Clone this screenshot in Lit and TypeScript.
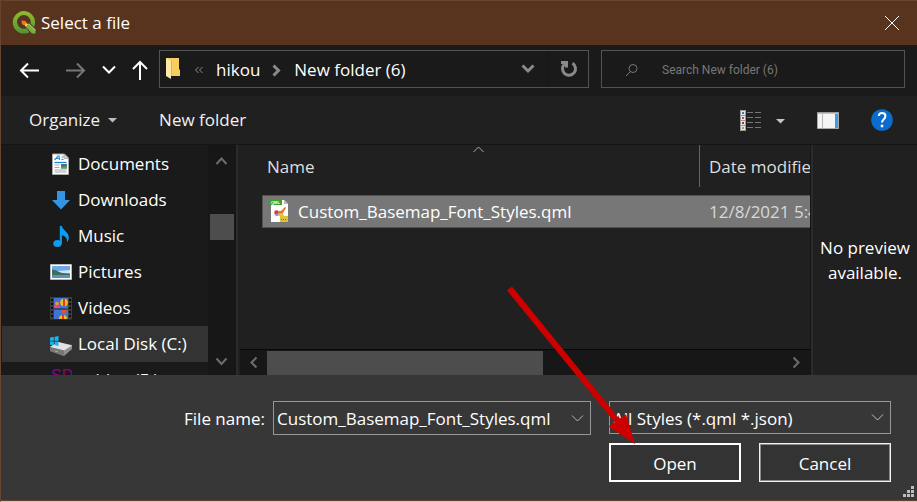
import { LitElement, html, css, svg, nothing } from "lit";
import { customElement, state } from "lit/decorators.js";

const qgisLogo = html`<svg class="logo" viewBox="0 0 24 24" width="24" height="24" aria-hidden="true">
  <defs><linearGradient id="ring" x1="0" y1="0" x2="0" y2="1"><stop offset="0" stop-color="#93bb2c"/><stop offset="1" stop-color="#4f9438"/></linearGradient></defs>
  <path fill="url(#ring)" fill-rule="evenodd" d="M12 0a11.300 11.300 0 1 0 5.500 21.200l-3-4A6.800 6.800 0 1 1 18.500 12.500l3.500 3.500A11.300 11.300 0 0 0 12 0z"/>
  <path fill="#76b041" d="M14 13l2.500-.3L23.500 19v3.500h-3.500l-6.500-7z"/>
  <path fill="#a5cf6a" d="M16 13l7.500 7v-1.500L17 12.500z"/>
  <path fill="#f8d648" d="M13 11.500l3 1.500-2 2.800-2-2.300z"/>
  <path fill="#ee7b1c" d="M9.500 9.500l4 .5 1.200 2-2.500 2.300-2.200-1z"/>
</svg>`;

const placeIcons = {
  documents: svg`
    <path d="M2.500 1h12L18.500 5v16.500h-16z" fill="#fff" stroke="#a9a9a9"/>
    <path d="M14 1v4.500h4.500z" fill="#d9d9d9" stroke="#999" stroke-width=".7"/>
    <path d="M4.500 7l3.500-4h1l.5 4M6.500 5.500h3M11.500 4h2M11.500 6.500h2" fill="none" stroke="#2d8fd0" stroke-width="1.200"/>
    <path d="M4.500 9.500h12" stroke="#1c86cc" stroke-width="1.300"/>
    <path d="M4.500 12h5M4.500 14.500h5M4.500 17h12M4.500 19h12" stroke="#a6a6a6"/>
    <path d="M11 11h6v4.500h-6z" fill="#42729c"/><path d="M11 14l6-1v2.500h-6z" fill="#6c9a4a"/>`,
  downloads: svg`<path d="M7 2h8v9h5L11 20.500 2 11h5z" fill="#3694e4"/>`,
  music: svg`<ellipse cx="7.500" cy="18.500" rx="4.200" ry="3.600" fill="#0c9cf2"/><path d="M9.800 1h2.200c.5 4.500 6.800 5.500 6.800 11.500 0 2-.7 3.700-1.800 4.700.5-4.500-2-6.200-5.100-7v8.500H9.800z" fill="#0c9cf2"/>`,
  pictures: svg`
    <path d="M.5 3.500h21v15h-21z" fill="#fff" stroke="#b9b9b9"/>
    <path d="M2 5h18v12H2z" fill="#70a8ea"/><path d="M2 9l6 1 12-1v4H2z" fill="#cfe4f5"/>
    <path d="M2 8.500c5 0 6 3 11 3.500l7 .5v1.500H2z" fill="#3b6f62"/><path d="M2 14h18v3H2z" fill="#5d93ba"/>`,
  videos: svg`
    <path d="M0 0h22v22.500H0z" fill="#3d3d3d"/><path d="M4 1h14v21H4z" fill="#4073d3"/>
    <path d="M4 12h14" stroke="#222"/>
    <circle cx="14" cy="5.500" r="3.800" fill="#f2bd19"/><path d="M13 2h2v7h-2z" fill="#df3a25"/>
    <path d="M4 8l4-2 2 5H4z" fill="#e5487d"/><circle cx="7" cy="6.500" r="1.800" fill="#ef9b2c"/>
    <path d="M11 13h6l-2 4h-2z" fill="#e1522f"/><path d="M9 22a4 4 0 0 1 8 0z" fill="#f2bd19"/><path d="M12 18h2v4h-2z" fill="#df3a25"/>
    <path d="M2 2v20M20 2v20" stroke="#0d0d0d" stroke-width="2" stroke-dasharray="2 2"/>`,
  disk: svg`
    <path d="M0 14l8-5 14 3v4l-8 7-14-5z" fill="#8f8f8f"/><path d="M0 14l8-5 14 3.500-8 5z" fill="#e3e3e3"/>
    <path d="M0 14l14 3.500v5L0 18z" fill="#777"/><path d="M5 18l3 .8" stroke="#5be35b"/>
    <path d="M0 4.500l3.800-.6v3.800H0zM4.600 3.800L8.500 3v4.700H4.600zM0 8.500h3.800v3.700L0 11.700zM4.600 8.500h3.900V13l-3.900-.7z" fill="#18b8ee"/>`,
  card: svg`<text x="1" y="12" class="sd">SD</text>`,
};

type Place = { label: string; icon: keyof typeof placeIcons };

const places: Place[] = [
  { label: "Documents", icon: "documents" },
  { label: "Downloads", icon: "downloads" },
  { label: "Music", icon: "music" },
  { label: "Pictures", icon: "pictures" },
  { label: "Videos", icon: "videos" },
  { label: "Local Disk (C:)", icon: "disk" },
  { label: "sabina (E:)", icon: "card" },
];

const files = [{ name: "Custom_Basemap_Font_Styles.qml", modified: "12/8/2021 5:42 PM" }];

const stroke = (d: string, w: number, h: number, width = 2) =>
  html`<svg class="line" viewBox="0 0 ${w} ${h}" width=${w} height=${h} aria-hidden="true"><path d=${d} stroke-width=${width} /></svg>`;

const chevron = stroke("M1 1.500l5.500 5.500 5.500-5.500", 13, 9, 1);

@customElement("app-root")
export class AppRoot extends LitElement {
  @state() private place = "Local Disk (C:)";

  static styles = css`
    :host {
      display: flex;
      flex-direction: column;
      min-height: 100vh;
      box-sizing: border-box;
      background: #1a1a1a;
      color: #fff;
      font: 17px/24px "Open Sans", "Noto Sans", sans-serif;
      border-left: 1px solid #68432d;
      border-bottom: 1px solid #c9c3be;
      position: relative;
    }
    * { box-sizing: border-box; }
    button, input, select {
      font: inherit;
      color: inherit;
      background: none;
      border: 0;
      border-radius: 0;
      margin: 0;
      padding: 0;
      outline: none;
    }
    button { display: inline-flex; align-items: center; justify-content: center; }
    svg { display: block; flex: none; }
    .line { fill: none; stroke: currentColor; }
    h1 { margin: 0; font: inherit; flex: 1; }
    .title {
      display: flex;
      align-items: center;
      height: 45px;
      padding: 0 16px 0 11px;
      gap: 5px;
      background: #58331d;
      border-top: 1px solid #68452f;
    }
    .nav {
      display: grid;
      grid-template-columns: 128px 430fr 304fr;
      align-items: center;
      height: 51px;
      padding: 5px 12px 8px 18px;
      gap: 12px;
    }
    .arrows { display: flex; align-items: center; gap: 16px; padding-top: 2px; }
    .dim { color: #777; margin-left: 9px; }
    .address {
      display: flex;
      align-items: center;
      min-width: 0;
      height: 38px;
      border: 1px solid #535353;
      padding-left: 5px;
    }
    .crumbs { display: flex; align-items: center; gap: 12px; flex: 1; padding: 2px 0 0 13px; white-space: nowrap; }
    .crumbs a { color: inherit; text-decoration: none; }
    .more { color: #8a8a8a; width: 10px; }
    .drop { width: 40px; height: 36px; color: #8a8a8a; }
    .refresh { border-left: 1px solid #151515; }
    .search {
      display: flex;
      align-items: center;
      min-width: 0;
      height: 38px;
      border: 1px solid #535353;
      padding: 2px 0 0 23px;
      gap: 24px;
      color: #777;
    }
    .search input { flex: 1; min-width: 0; font: 12px "Roboto", sans-serif; }
    .search input::placeholder { color: #777; opacity: 1; }
    .tools {
      display: flex;
      align-items: center;
      height: 49px;
      padding: 0 24px 0 28px;
      background: #202020;
      border-bottom: 1px solid #151515;
    }
    .tools button { color: #f0f0f0; gap: 8px; }
    .newfolder { margin-left: 42px; margin-right: auto; }
    .views { margin-right: 32px; }
    .preview-toggle { margin-right: 32px; }
    .body { display: flex; flex: 1 1 0; min-height: 230px; overflow: hidden; }
    .places { list-style: none; margin: 0; padding: 1px 0 0 1px; width: 207px; flex: none; height: 0; min-height: 100%; overflow: hidden; }
    .places a {
      display: flex;
      align-items: center;
      gap: 6px;
      height: 36px;
      padding-left: 48px;
      color: inherit;
      text-decoration: none;
      white-space: nowrap;
    }
    .places .current { background: #333; }
    .sd { font: 16px "Liberation Sans", sans-serif; fill: #8b008b; }
    .vbar {
      display: flex;
      flex-direction: column;
      align-items: center;
      width: 27px;
      padding: 10px 0 8px;
      background: #171717;
      color: #6d6d6d;
    }
    .vthumb { width: 24px; height: 26px; background: #4d4d4d; margin-top: 49px; margin-bottom: auto; }
    .split { width: 3px; background: #2b2b2b; border-left: 1px solid #151515; flex: none; }
    .pane { flex: 1; min-width: 0; display: flex; flex-direction: column; background: #202020; padding-left: 2px; }
    .list { flex: 1; min-height: 0; overflow: hidden; margin-left: 22px; position: relative; }
    .sort { position: absolute; top: 1px; left: 211px; color: #aaa; }
    table { border-collapse: separate; border-spacing: 0; table-layout: fixed; width: calc(100% + 80px); }
    th { font-weight: 400; text-align: left; height: 42px; padding: 1px 5px 0; color: #dedede; white-space: nowrap; }
    th + th { width: 191px; border-left: 1px solid #636363; padding-left: 9px; }
    .spacer td { height: 8px; padding: 0; border: 0; background: none; }
    td {
      height: 33px;
      padding: 0 6px;
      white-space: nowrap;
      background: #777;
      border: solid #505050;
      border-width: 1px 0;
    }
    td:first-child { border-left-width: 1px; }
    td + td { padding-left: 10px; color: #d8d8d8; }
    .file { display: flex; align-items: center; gap: 9px; }
    .badge { font: 700 4px "Liberation Sans", sans-serif; fill: #fff; }
    .hbar { display: flex; align-items: center; height: 26px; background: #171717; border-top: 1px solid #080808; color: #6d6d6d; padding: 0 9px; }
    .hthumb { width: 50%; height: 24px; background: #4d4d4d; margin-left: 9px; margin-right: auto; }
    .preview {
      width: 104px;
      flex: none;
      display: flex;
      align-items: center;
      justify-content: center;
      text-align: center;
      background: #202020;
    }
    .preview p { margin: 0; line-height: 25px; }
    .footer {
      display: flex;
      flex-direction: column;
      gap: 8px;
      height: 126px;
      padding: 26px 26px 0 0;
      background: #373737;
      border-bottom: 1px solid #6b422b;
      position: relative;
    }
    .fields { display: flex; align-items: flex-start; }
    .fields label { width: 264px; text-align: right; line-height: 36px; height: 34px; margin-right: 8px; flex: none; }
    .combo { display: flex; align-items: center; flex: 1; min-width: 0; height: 34px; border: 1px solid #979797; margin-right: 18px; }
    .combo input { flex: 1; min-width: 0; padding-left: 3px; height: 32px; }
    .combo button { width: 26px; height: 32px; color: #b8b8b8; }
    .filter { display: grid; align-items: center; width: 282px; flex: none; }
    .filter select { grid-area: 1 / 1; appearance: none; width: 100%; height: 33px; border: 1px solid #979797; padding: 2px 0 0 3px; }
    .filter svg { grid-area: 1 / 1; justify-self: end; margin-right: 7px; color: #c0c0c0; pointer-events: none; }
    .actions { display: flex; justify-content: flex-end; gap: 18px; }
    .actions button { width: 132px; height: 39px; padding-top: 2px; background: #333; border: 1px solid #f0f0f0; box-shadow: inset 0 0 0 1px #8b8b8b; }
    .actions .primary { border: 2px solid #fff; box-shadow: none; }
    .grip { position: absolute; right: 3px; bottom: 2px; color: #bdbdbd; }
    .pointer { position: absolute; right: 276px; bottom: 56px; pointer-events: none; }
  `;

  private fileIcon() {
    return html`<svg width="20" height="24" viewBox="0 0 20 24" aria-hidden="true">
      <path d="M2 0h13l4 4v18H2z" fill="#fff" />
      <path d="M15 0v4h4z" fill="#b6b6b6" />
      <path d="M0 0h13v5H0z" fill="#3da526" />
      <text x="2" y="4" class="badge">QML</text>
      <circle cx="7.500" cy="12.500" r="2.200" fill="#e2342d" /><path d="M5 15l3 1 3-1-2-2z" fill="#6b9ae0" />
      <path d="M9 11l3 0 4-4 1 1-3 5 0 3-3 0z" fill="#d77b32" />
      <path d="M9 14l4-1 2 2-1 2-4-1z" fill="#eac43b" /><path d="M11 16h8v6h-8z" fill="#dcc338" /><path d="M12 19.500h6" stroke="#8c7a1c" stroke-dasharray="1 1" />
    </svg>`;
  }

  render() {
    return html`
      <header class="title">
        ${qgisLogo}
        <h1>Select a file</h1>
        <button aria-label="Close">${stroke("M1 1l14 14M15 1L1 15", 17, 16, 1)}</button>
      </header>

      <nav class="nav" aria-label="Location">
        <div class="arrows">
          <button aria-label="Back">${stroke("M20 8.500H2M9 1.500l-7 7 7 7", 21, 17)}</button>
          <button class="dim" aria-label="Forward">${stroke("M1 8.500h18M12 1.500l7 7-7 7", 21, 17)}</button>
          <button aria-label="Recent locations">${stroke("M1 1.500l6 6 6-6", 14, 10)}</button>
          <button aria-label="Up">${stroke("M8 20V2M1 9l7-7 7 7", 16, 20)}</button>
        </div>
        <div class="address">
          <svg width="16" height="22" viewBox="0 0 16 22" aria-hidden="true">
            <path d="M1 0h13v11l1 1v6H1z" fill="#f6cd61" />
            <path d="M1 0l5 3v18l-5-3z" fill="#ffe9a5" />
            <path d="M6 3h1v15H6z" fill="#dfb44d" />
          </svg>
          <div class="crumbs">
            <span class="more">${stroke("M4.500 1L1.500 4l3 3M8.500 1l-3 3 3 3", 10, 8, 1)}</span>
            <a href="#hikou">hikou</a>
            <span class="more">${stroke("M1.500 1.500l5 5-5 5", 10, 13, 3)}</span>
            <a href="#new-folder-6">New folder (6)</a>
          </div>
          <button class="drop" aria-label="Previous locations">${stroke("M1.500 1.500l5.500 5.500 5.500-5.500", 14, 10, 3)}</button>
          <button class="drop refresh" aria-label="Refresh">${stroke("M1 2.500h5.500v5M4.500 4a6.500 6.500 0 1 0 8-.8", 18, 18, 3)}</button>
        </div>
        <div class="search">
          ${stroke("M1 12l4.500-4.500M12 4.500a4 4 0 1 1-8 0 4 4 0 0 1 8 0z", 13, 13, 1)}
          <input type="search" aria-label="Search" placeholder="Search New folder (6)" />
        </div>
      </nav>

      <div class="tools">
        <button>Organize<svg width="9" height="5" viewBox="0 0 9 5" aria-hidden="true"><path d="M0 0h9L4.500 4.500z" fill="#bbb" /></svg></button>
        <button class="newfolder">New folder</button>
        <button class="views" aria-label="Change view">
          <svg width="45" height="21" viewBox="0 0 45 21" aria-hidden="true">
            <path d="M0 0h6v21H0z" fill="#e8e8e8" />
            <path d="M.5.500h5v20h-5zM0 5.500h6M0 10.500h6M0 15.500h6" fill="none" stroke="#999" />
            <path d="M2 2h2v2H2z" fill="#3c78a8" /><path d="M2 7h2v2H2z" fill="#796a55" />
            <path d="M2 12h2v2H2z" fill="#c9201c" /><path d="M2 17h2v2H2z" fill="#82b05c" />
            <path d="M7 2.500h6M15 2.500h6M7 7.500h6M15 7.500h6M7 12.500h6M15 12.500h6M7 17.500h6M15 17.500h6" stroke="#777" />
            <path d="M36 9h9l-4.500 4.500z" fill="#c4c4c4" />
          </svg>
        </button>
        <button class="preview-toggle" aria-label="Preview pane">
          <svg width="22" height="17" viewBox="0 0 22 17" aria-hidden="true">
            <path d="M.5.500h21v16H.5z" fill="#f4f4f4" stroke="#a9a9a9" />
            <path d="M1 1h20" stroke="#8f8f8f" /><path d="M5.500 1v15" stroke="#b5b5b5" />
            <path d="M18 2h3v14h-3z" fill="#3c9be8" />
          </svg>
        </button>
        <button aria-label="Help">
          <svg width="22" height="22" viewBox="0 0 22 22" aria-hidden="true">
            <circle cx="11" cy="11" r="10.800" fill="#0a6ccd" />
            <path d="M7.800 7c.2-4 6.600-4 6.600.2 0 3-3.400 3-3.400 6.300" fill="none" stroke="#fff" stroke-width="2" /><circle cx="11" cy="17" r="1.400" fill="#fff" />
          </svg>
        </button>
      </div>

      <main class="body">
        <ul class="places">
          ${places.map(
            (p) => html`<li>
              <a href="#${p.icon}" class=${p.label === this.place ? "current" : ""} aria-current=${p.label === this.place ? "true" : nothing}
                @click=${() => (this.place = p.label)}>
                <svg width="22" height="23" viewBox="0 0 22 23" aria-hidden="true">${placeIcons[p.icon]}</svg>${p.label}
              </a>
            </li>`
          )}
        </ul>
        <div class="vbar">
          ${stroke("M1.500 9L6.500 3.500 11.500 9", 13, 10)}
          <div class="vthumb"></div>
          ${stroke("M1.500 1.500l5 5.500 5-5.500", 13, 10)}
        </div>
        <div class="split"></div>
        <section class="pane">
          <div class="list">
            <table>
              <thead>
                <tr><th scope="col">Name</th><th scope="col">Date modified</th></tr>
              </thead>
              <tbody>
                <tr class="spacer"><td colspan="2"></td></tr>
                ${files.map((f) => html`<tr><td><div class="file">${this.fileIcon()}${f.name}</div></td><td>${f.modified}</td></tr>`)}
              </tbody>
            </table>
            <span class="sort">${stroke("M.500 6l5-5 5 5", 11, 7, 1)}</span>
          </div>
          <div class="hbar">
            ${stroke("M7.500 1.500l-5 5 5 5", 9, 13)}
            <div class="hthumb"></div>
            ${stroke("M1.500 1.500l5 5-5 5", 9, 13)}
          </div>
        </section>
        <div class="split"></div>
        <aside class="preview"><p>No preview available.</p></aside>
      </main>

      <footer class="footer">
        <div class="fields">
          <label for="filename">File name:</label>
          <div class="combo">
            <input id="filename" type="text" .value=${files[0].name} />
            <button aria-label="Recent file names">${chevron}</button>
          </div>
          <div class="filter">
            <select aria-label="File type"><option>All Styles (*.qml *.json)</option></select>
            ${chevron}
          </div>
        </div>
        <div class="actions">
          <button class="primary">Open</button>
          <button>Cancel</button>
        </div>
        <svg class="grip" width="12" height="12" viewBox="0 0 12 12" aria-hidden="true">
          <path d="M9 0h3v3H9zM5 4h3v3H5zM9 4h3v3H9zM1 8h3v3H1zM5 8h3v3H5zM9 8h3v3H9z" fill="currentColor" />
        </svg>
      </footer>

      <svg class="pointer" width="134" height="160" viewBox="0 0 134 160" aria-hidden="true">
        <path d="M0 5.500L5 1.500 112.300 133.700 119 129.500 128 159 101.500 141.500 107.700 137.300z" fill="#cd0000" />
      </svg>
    `;
  }
}
